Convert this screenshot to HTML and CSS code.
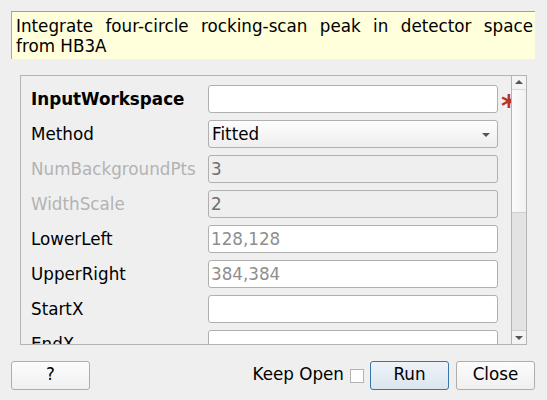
FILE: index.html
```
<!DOCTYPE html>
<html>
<head>
<meta charset="utf-8">
<link rel="stylesheet" href="styles.css">
</head>
<body>
<div class="desc">Integrate four-circle rocking-scan peak in detector space from HB3A</div>
<div class="frame">
  <div class="rows">
    <div class="row"><span class="label bold">InputWorkspace</span><span class="field"></span><span class="star">*</span></div>
    <div class="row"><span class="label">Method</span><span class="field combo">Fitted<span class="arrow"></span></span></div>
    <div class="row"><span class="label dis">NumBackgroundPts</span><span class="field disabled">3</span></div>
    <div class="row"><span class="label dis">WidthScale</span><span class="field disabled">2</span></div>
    <div class="row"><span class="label">LowerLeft</span><span class="field ph">128,128</span></div>
    <div class="row"><span class="label">UpperRight</span><span class="field ph">384,384</span></div>
    <div class="row"><span class="label">StartX</span><span class="field"></span></div>
    <div class="row"><span class="label">EndX</span><span class="field"></span></div>
  </div>
  <div class="scrollbar">
    <div class="sb-btn"><span class="up"></span></div>
    <div class="sb-handle"></div>
    <div class="sb-track"></div>
    <div class="sb-btn"><span class="down"></span></div>
  </div>
</div>
<div class="footer">
  <button class="btn">?</button>
  <span class="spacer"></span>
  <span class="keep">Keep Open</span><span class="check"></span>
  <button class="btn run">Run</button>
  <button class="btn">Close</button>
</div>
</body>
</html>
```
FILE: styles.css
```
html, body { margin: 0; padding: 0; }
body {
  background: #efefef;
  font-family: "DejaVu Sans", sans-serif;
  font-size: 16.75px;
  color: #000;
  width: 547px;
  height: 400px;
  overflow: hidden;
}
.desc {
  margin: 11px 12px 0 11px;
  background: #ffffdc;
  border-top: 1px solid #a0a0a0;
  border-left: 1px solid #a8a8a8;
  padding: 4px 2px 0 4px;
  box-sizing: border-box;
  height: 48px;
  line-height: 20px;
  text-align: justify;
}
.frame {
  margin: 16px 0 0 20px;
  width: 507px;
  height: 270px;
  box-sizing: border-box;
  border: 1px solid #b4b4b4;
  display: flex;
  overflow: hidden;
}
.rows {
  flex: 1;
  padding: 9px 0 0 10px;
  display: flex;
  flex-direction: column;
  gap: 7px;
  overflow: hidden;
}
.row {
  display: flex;
  align-items: center;
  height: 28px;
  flex: none;
}
.label {
  width: 177px;
  flex: none;
  white-space: nowrap;
}
.bold { font-weight: bold; }
.dis { color: #b3b3b3; }
.field {
  width: 290px;
  height: 28px;
  flex: none;
  box-sizing: border-box;
  border: 1px solid #b0b0b0;
  border-radius: 3px;
  background: #fff;
  padding: 0 0 0 2px;
  line-height: 26px;
  position: relative;
}
.field.disabled { background: #efefef; color: #6e6e6e; }
.field.ph { color: #8e8e8e; }
.field.combo {
  background: linear-gradient(#fdfdfd, #eeeeee);
  padding-left: 3px;
  color: #000;
}
.arrow {
  position: absolute;
  right: 7px;
  top: 12px;
  width: 0; height: 0;
  border-left: 4px solid transparent;
  border-right: 4px solid transparent;
  border-top: 4px solid #555;
}
.star {
  color: #b83227;
  font-weight: bold;
  font-size: 30px;
  margin-left: 3px;
  line-height: 1;
  margin-top: 13px;
  flex: none;
}
.scrollbar {
  width: 15px;
  flex: none;
  box-sizing: border-box;
  border-left: 1px solid #b4b4b4;
  display: flex;
  flex-direction: column;
  background: #e3e3e3;
}
.sb-btn {
  height: 13px;
  flex: none;
  background: #f4f4f4;
  position: relative;
}
.sb-handle {
  height: 122px;
  flex: none;
  background: linear-gradient(90deg, #fbfbfb, #f2f2f2);
  border-top: 1px solid #dcdcdc;
  border-bottom: 1px solid #cfcfcf;
}
.sb-track { flex: 1; background: #e3e3e3; }
.up, .down {
  position: absolute;
  left: 3px;
  width: 0; height: 0;
  border-left: 4px solid transparent;
  border-right: 4px solid transparent;
}
.up { top: 4px; border-bottom: 4px solid #555; }
.down { top: 5px; border-top: 4px solid #555; }
.sb-btn:last-child { border-top: 1px solid #cfcfcf; }
.footer {
  display: flex;
  align-items: center;
  margin: 16px 12px 0 11px;
  height: 29px;
}
.spacer { flex: 1; }
.btn {
  font-family: "DejaVu Sans", sans-serif;
  font-size: 16.75px;
  width: 79px;
  height: 29px;
  box-sizing: border-box;
  border: 1px solid #adadad;
  border-radius: 3px;
  background: linear-gradient(#fcfcfc, #f0f0f0);
  color: #000;
  padding: 0 0 3px 0;
  margin: 0;
}
.btn.run {
  border-color: #3a76ab;
  background: linear-gradient(#eef3f8, #dbe5ef);
  margin: 0 7px 0 6px;
}
.keep { margin-right: 6px; margin-bottom: 3px; }
.check {
  width: 14px;
  height: 14px;
  box-sizing: border-box;
  border: 1px solid #b4b4b4;
  background: #fff;
}
```
